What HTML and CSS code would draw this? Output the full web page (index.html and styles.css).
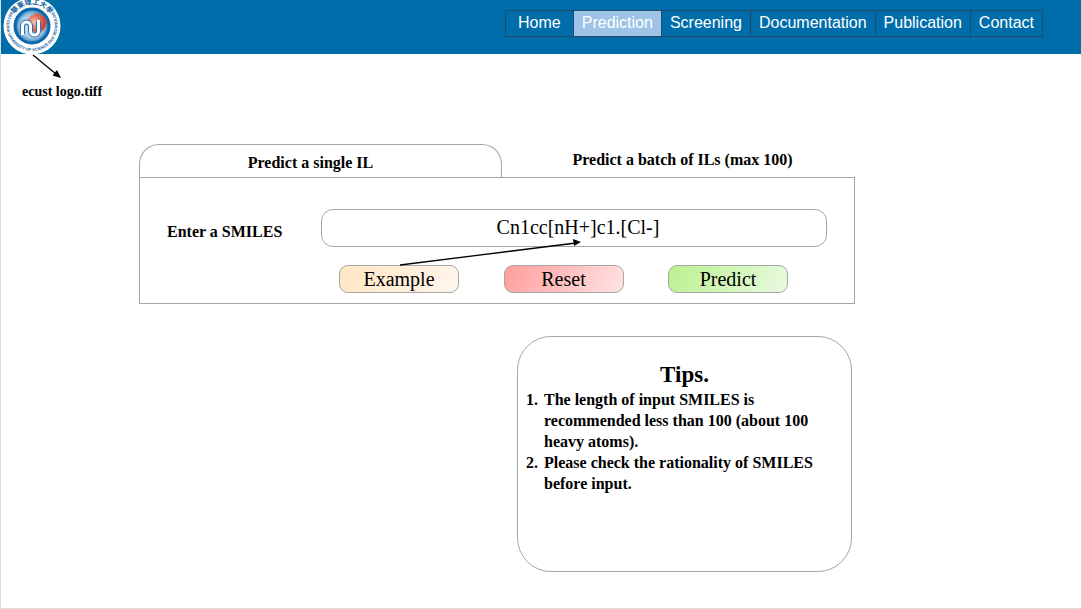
FILE: index.html
```html
<!DOCTYPE html>
<html lang="en">
  <head>
    <meta charset="utf-8">
    <title>Prediction</title>
    <link rel="stylesheet" href="styles.css">
  </head>
  <body>
    <header class="header">
      <svg class="logo" viewBox="0 0 58 58" role="img" aria-label="East China University of Science and Technology">
        <defs>
          <path id="ring-bottom" d="M8 14 A25.500 25.500 0 1 0 50 14" />
          <path id="ring-top" d="M9 22 A21 21 0 0 1 49 22" />
          <radialGradient id="sun" cx="35%" cy="45%" r="60%">
            <stop offset="0" stop-color="#f6c3b3" />
            <stop offset="1" stop-color="#cf3a24" />
          </radialGradient>
          <radialGradient id="disc">
            <stop offset="0" stop-color="#e4f0f8" />
            <stop offset="0.650" stop-color="#a3cbe6" />
            <stop offset="1" stop-color="#0f6cae" />
          </radialGradient>
        </defs>
        <circle cx="29" cy="29" r="28.500" fill="#fff" />
        <circle cx="29" cy="29" r="18" fill="url(#disc)" />
        <circle cx="29" cy="29" r="17" fill="none" stroke="#0b69aa" stroke-width="3" />
        <circle cx="34" cy="26" r="9" fill="url(#sun)" />
        <circle cx="34" cy="26" r="9.500" fill="none" stroke="#cf3a24" stroke-dasharray="1 1" />
        <path d="M19.500 37 V29 A4 4 0 0 1 27.500 29 V34 A4 4 0 0 0 35.500 34 V24" fill="none" stroke="#2a74ae" stroke-width="5" />
        <path d="M19.500 38 V29 A4 4 0 0 1 27.500 29 V34 A4 4 0 0 0 35.500 34 V23" fill="none" stroke="#fff" stroke-width="3" />
        <text class="logo-latin"><textPath href="#ring-bottom" startOffset="50%" text-anchor="middle">EAST CHINA UNIVERSITY OF SCIENCE AND TECHNOLOGY</textPath></text>
        <text class="logo-han"><textPath href="#ring-top" startOffset="50%" text-anchor="middle">華東理工大學</textPath></text>
      </svg>
      <nav class="nav">
        <a class="nav-link nav-home" href="#">Home</a>
        <a class="nav-link active" href="#">Prediction</a>
        <a class="nav-link" href="#">Screening</a>
        <a class="nav-link" href="#">Documentation</a>
        <a class="nav-link" href="#">Publication</a>
        <a class="nav-link" href="#">Contact</a>
      </nav>
    </header>

    <div class="logo-note">
      <svg class="note-arrow" viewBox="0 0 30 25" aria-hidden="true">
        <path d="M1 1 L24 20" stroke="#000" stroke-width="1.300" />
        <path d="M29 24 L20.500 21.500 L25 16 Z" />
      </svg>
      ecust logo.tiff
    </div>

    <main class="main">
      <div class="tabs">
        <button class="tab selected" type="button">Predict a single IL</button>
        <button class="tab" type="button">Predict a batch of ILs (max 100)</button>
      </div>
      <form class="panel">
        <label class="smiles-label" for="smiles">Enter a SMILES</label>
        <input class="smiles-input" type="text" id="smiles" value="Cn1cc[nH+]c1.[Cl-]">
        <div class="actions">
          <button class="btn btn-example" type="button">Example
            <svg class="example-arrow" viewBox="0 0 182 28" aria-hidden="true">
              <path d="M0 26 L176 4" stroke="#000" stroke-width="1.300" />
              <path d="M181 3 L173 0 L174 7 Z" />
            </svg>
          </button>
          <button class="btn btn-reset" type="button">Reset</button>
          <button class="btn btn-predict" type="button">Predict</button>
        </div>
      </form>

      <section class="tips">
        <h2 class="tips-title">Tips.</h2>
        <ol class="tips-list">
          <li>The length of input SMILES is recommended less than 100 (about 100 heavy atoms).</li>
          <li>Please check the rationality of SMILES before input.</li>
        </ol>
      </section>
    </main>
  </body>
</html>
```
FILE: styles.css
```css
* {
  box-sizing: border-box;
}

body {
  margin: 0;
  min-height: 100vh;
  border-left: 1px solid #dcdcdc;
  border-bottom: 1px solid #dcdcdc;
  background-color: #fff;
  color: #000;
  font-family: "Liberation Serif", "Times New Roman", serif;
}

.header {
  display: flex;
  justify-content: space-between;
  align-items: flex-start;
  height: 54px;
  padding: 0 38px 0 2px;
  background-color: #006dab;
}

.logo {
  width: 58px;
  height: 58px;
  margin-top: -3px;
}

.logo-latin {
  font: bold 4px "Liberation Sans Narrow", "Liberation Sans", Arial, sans-serif;
  fill: #0b5c9a;
}

.logo-han {
  font: bold 7px "Noto Sans CJK TC", sans-serif;
  fill: #0b5c9a;
}

.nav {
  display: flex;
  margin-top: 10px;
  border: 1px solid #24476a;
}

.nav-link {
  padding: 0 8px 2px;
  font: 16px/23px "Liberation Sans", Arial, sans-serif;
  color: #fff;
  text-decoration: none;
}

.nav-link + .nav-link {
  border-left: 1px solid #24476a;
}

.nav-link.nav-home {
  padding: 0 12px 2px;
}

.nav-link.active {
  background-color: #9dc3e6;
}

.logo-note {
  position: relative;
  padding: 29px 0 0 21px;
  font-size: 14px;
  line-height: 18px;
  font-weight: bold;
}

.note-arrow {
  position: absolute;
  left: 31px;
  top: 0;
  width: 30px;
  height: 25px;
}

.main {
  padding: 43px 226px 0 138px;
}

.tabs {
  display: grid;
  grid-template-columns: 363fr 353fr;
}

.tab {
  height: 33px;
  padding: 0 0 2px 8px;
  border: 1px solid transparent;
  border-bottom: none;
  background: none;
  font: bold 16px/20px "Liberation Serif", "Times New Roman", serif;
  color: #000;
}

.tab.selected {
  padding: 4px 20px 0 0;
  border-color: #a6a6a6;
  border-radius: 20px 20px 0 0;
}

.panel {
  display: grid;
  grid-template-columns: 154px 1fr;
  row-gap: 18px;
  align-items: center;
  padding: 31px 27px 10px;
  border: 1px solid #a6a6a6;
}

.smiles-label {
  padding-top: 8px;
  font-size: 16px;
  font-weight: bold;
}

.smiles-input {
  width: 100%;
  height: 38px;
  padding: 0 0 2px 8px;
  border: 1px solid #a6a6a6;
  border-radius: 12px;
  background-color: #fff;
  font: 20px "Liberation Serif", "Times New Roman", serif;
  color: #000;
  text-align: center;
}

.actions {
  grid-column: 2;
  display: flex;
  justify-content: space-between;
  padding: 0 39px 0 18px;
}

.btn {
  position: relative;
  width: 120px;
  height: 28px;
  padding: 0;
  border: 1px solid #a6a6a6;
  border-radius: 9px;
  font: 20px/24px "Liberation Serif", "Times New Roman", serif;
  color: #000;
}

.btn-example {
  background: linear-gradient(120deg, #ffe6c1, #fff6ef);
}

.btn-reset {
  background: linear-gradient(120deg, #ff9d9d, #ffe3e3);
}

.btn-predict {
  background: linear-gradient(120deg, #b9f18f, #e9fae1);
}

.example-arrow {
  position: absolute;
  left: 60px;
  bottom: 25px;
  width: 182px;
  height: 28px;
  pointer-events: none;
}

.tips {
  min-height: 236px;
  margin: 32px 3px 0 378px;
  padding: 24px 24px 24px 8px;
  border: 1px solid #a6a6a6;
  border-radius: 34px;
}

.tips-title {
  margin: 0;
  padding-left: 16px;
  font-size: 23px;
  line-height: 28px;
  text-align: center;
}

.tips-list {
  margin: 0;
  padding-left: 16px;
  font-size: 16px;
  line-height: 21px;
  font-weight: bold;
}

.tips-list li {
  padding-left: 2px;
}
```
